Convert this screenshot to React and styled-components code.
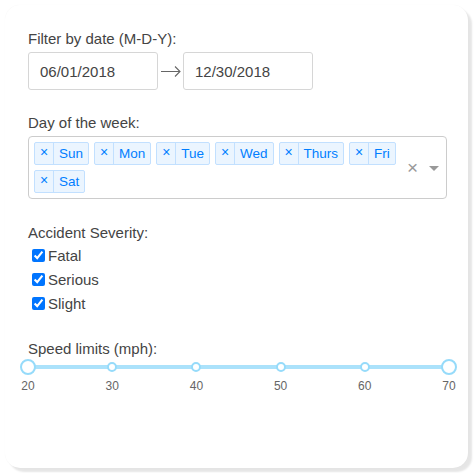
import React from 'react';
import styled, { createGlobalStyle } from 'styled-components';

const GlobalStyle = createGlobalStyle`
    body {
        margin: 0;
        background: #fff;
        font-family: "Liberation Sans", Arial, sans-serif;
    }
`;

const days = ['Sun', 'Mon', 'Tue', 'Wed', 'Thurs', 'Fri', 'Sat'];
const severities = ['Fatal', 'Serious', 'Slight'];
const marks = [20, 30, 40, 50, 60, 70];

const App = () => {
    return (
        <>
            <GlobalStyle />
            <Card>
                <Label>Filter by date (M-D-Y):</Label>
                <DateRange>
                    <DateInput>06/01/2018</DateInput>
                    <Arrow>
                        <svg width="24" height="24" viewBox="0 0 24 24">
                            <path d="M2 12.5h19M16 7.5l5 5-5 5" fill="none" stroke="#666" strokeWidth="1.1" />
                        </svg>
                    </Arrow>
                    <DateInput>12/30/2018</DateInput>
                </DateRange>

                <Label $top={24}>Day of the week:</Label>
                <SelectBox>
                    <Values>
                        {days.map((d) => (
                            <Tag key={d}>
                                <TagIcon>×</TagIcon>
                                <TagLabel>{d}</TagLabel>
                            </Tag>
                        ))}
                    </Values>
                    <ClearZone>×</ClearZone>
                    <ArrowZone>
                        <Caret />
                    </ArrowZone>
                </SelectBox>

                <Label $top={25}>Accident Severity:</Label>
                <CheckList>
                    {severities.map((s) => (
                        <CheckRow key={s}>
                            <input type="checkbox" defaultChecked />
                            {s}
                        </CheckRow>
                    ))}
                </CheckList>

                <Label $top={25}>Speed limits (mph):</Label>
                <Slider>
                    <Rail />
                    {marks.map((m, i) => {
                        const left = (i / (marks.length - 1)) * 100 + '%';
                        const edge = i === 0 || i === marks.length - 1;
                        return (
                            <React.Fragment key={m}>
                                {edge ? <Handle style={{ left }} /> : <Dot style={{ left }} />}
                                <Mark style={{ left }}>{m}</Mark>
                            </React.Fragment>
                        );
                    })}
                </Slider>
            </Card>
        </>
    );
};

const Card = styled.div`
    box-sizing: border-box;
    margin: 5px;
    width: 463px;
    height: 463px;
    padding: 25px 19px 0 23px;
    background: #fff;
    border-radius: 15px;
    box-shadow: 4px 4px 2px rgba(0, 0, 0, 0.1), 0 0 1px rgba(0, 0, 0, 0.06);
`;

const Label = styled.div`
    margin-top: ${(p) => p.$top || 0}px;
    font-size: 15px;
    line-height: 17px;
    color: #444;
`;

const DateRange = styled.div`
    display: flex;
    align-items: center;
    margin-top: 5px;
`;

const DateInput = styled.div`
    box-sizing: border-box;
    width: 130px;
    height: 38px;
    padding-left: 11px;
    display: flex;
    align-items: center;
    border: 1px solid #d6d6d6;
    border-radius: 3px;
    font-size: 15px;
    color: #444;
`;

const Arrow = styled.div`
    width: 25px;
    display: flex;
    justify-content: center;
`;

const SelectBox = styled.div`
    box-sizing: border-box;
    margin-top: 5px;
    width: 419px;
    display: flex;
    align-items: center;
    border: 1px solid #ccc;
    border-radius: 4px;
`;

const Values = styled.div`
    flex: 1;
    display: flex;
    flex-wrap: wrap;
    padding-bottom: 5px;
`;

const Tag = styled.div`
    box-sizing: border-box;
    display: flex;
    height: 23px;
    margin: 5px 0 0 5px;
    background: #ebf5ff;
    border: 1px solid #c2e0ff;
    border-radius: 2px;
    color: #007eff;
    font-size: 13.5px;
`;

const TagIcon = styled.span`
    width: 19px;
    display: flex;
    align-items: center;
    justify-content: center;
    border-right: 1px solid #c2e0ff;
    font-size: 14px;
    padding-bottom: 3px;
    box-sizing: border-box;
`;

const TagLabel = styled.span`
    display: flex;
    align-items: center;
    padding: 0 5px;
`;

const ClearZone = styled.span`
    width: 17px;
    text-align: center;
    color: #999;
    font-size: 19px;
    line-height: 1;
`;

const ArrowZone = styled.span`
    width: 25px;
    display: flex;
    justify-content: center;
`;

const Caret = styled.span`
    width: 0;
    height: 0;
    border-style: solid;
    border-width: 5px 5px 2.5px;
    border-color: #999 transparent transparent;
    margin-top: 3px;
`;

const CheckList = styled.div`
    display: flex;
    flex-direction: column;
    margin-top: 2px;
`;

const CheckRow = styled.label`
    height: 24px;
    display: flex;
    align-items: center;
    font-size: 15px;
    color: #444;

    input {
        margin: 0 3px 0 4px;
        width: 13px;
        height: 13px;
    }
`;

const Slider = styled.div`
    position: relative;
    margin-top: 8px;
    width: 421px;
    height: 40px;
`;

const Rail = styled.div`
    position: absolute;
    left: 0;
    right: 0;
    top: 0;
    height: 4px;
    border-radius: 2px;
    background: #abe2fb;
`;

const Dot = styled.span`
    position: absolute;
    top: -3px;
    box-sizing: border-box;
    width: 10px;
    height: 10px;
    margin-left: -5px;
    border: 2px solid #96dbfa;
    border-radius: 50%;
    background: #fff;
`;

const Handle = styled.span`
    position: absolute;
    top: -6px;
    box-sizing: border-box;
    width: 16px;
    height: 16px;
    margin-left: -8px;
    border: 2px solid #96dbfa;
    border-radius: 50%;
    background: #fff;
`;

const Mark = styled.span`
    position: absolute;
    top: 14px;
    transform: translateX(-50%);
    font-size: 12px;
    color: #666;
`;

export default App;
